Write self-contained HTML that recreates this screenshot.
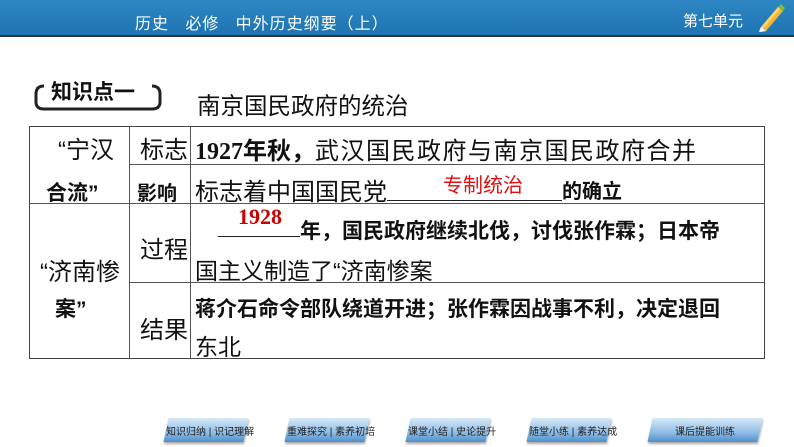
<!DOCTYPE html>
<html><head><meta charset="utf-8"><style>
*{margin:0;padding:0;box-sizing:border-box}
body{width:794px;height:447px;background:#fff;position:relative;overflow:hidden;font-family:"Liberation Sans","Noto Sans CJK SC",sans-serif}
.top{position:absolute;left:0;top:0;width:794px;height:35px;background:linear-gradient(180deg,#2d86c2,#1f74b2)}
.line{position:absolute;left:0;top:35px;width:794px;height:2px;background:#333}
.t{position:absolute;color:#fff;font-size:16px;top:10px;white-space:nowrap}
.a{position:absolute;white-space:nowrap;color:#111}
.s{font-family:"Liberation Serif","Noto Serif CJK SC",serif}
.h{position:absolute;background:#555}
.nav{position:absolute;top:418px;height:24px;width:80px;transform:skewX(-12deg);background:linear-gradient(#d8e9f7,#8fbde6 60%,#4f8fcb);box-shadow:1px 2px 2px #aaa}
.nt{position:absolute;top:423px;font-size:10px;color:#222;width:80px;text-align:center;white-space:nowrap}
</style></head><body>
<div class="top"></div><div class="line"></div>
<div class="t" style="left:135px;letter-spacing:1px">历史&nbsp;&nbsp;&nbsp;必修&nbsp;&nbsp;&nbsp;中外历史纲要（上）</div>
<div class="t" style="left:683px;font-size:15px">第七单元</div>
<svg style="position:absolute;left:758px;top:2px" width="28" height="30" viewBox="0 0 28 30"><path d="M3 25 L20 5 L25 9 L8 29 Z" fill="#f2b630"/><path d="M3 25 L20 5 L22 7 L5 27 Z" fill="#f7d56a"/><path d="M20 5 L25 9 L27 6 L23 2 Z" fill="#7cbc3a"/><path d="M3 25 L8 29 L1 30 Z" fill="#fff" stroke="#ccc" stroke-width=".5"/></svg>
<svg style="position:absolute;left:32px;top:78px" width="134" height="34"><path d="M4 16 Q4 8 12 8 M4 16 L4 24 Q4 31 12 31 L120 31 Q128 31 128 24 L128 16 Q128 8 120 8" fill="none" stroke="#222" stroke-width="3"/></svg>
<div class="a" style="left:51px;top:76px;font-size:21px;font-weight:bold">知识点一</div>
<div class="a" style="left:197px;top:87px;font-size:23.5px">南京国民政府的统治</div>
<!-- table -->
<div style="position:absolute;left:29px;top:126px;width:736px;height:233px;border:1.5px solid #444"></div>
<div class="h" style="left:129px;top:126px;width:1px;height:233px"></div>
<div class="h" style="left:190px;top:126px;width:1px;height:233px"></div>
<div class="h" style="left:129px;top:164px;width:636px;height:1px"></div>
<div class="h" style="left:29px;top:203px;width:736px;height:1px"></div>
<div class="h" style="left:129px;top:282px;width:636px;height:1px"></div>
<div class="a" style="left:58px;top:130px;font-size:24px">“宁汉</div>
<div class="a" style="left:46px;top:177px;font-size:21px;font-weight:bold">合流”</div>
<div class="a" style="left:140px;top:130px;font-size:24px">标志</div>
<div class="a" style="left:137px;top:177px;font-size:20px;font-weight:bold">影响</div>
<div class="a" style="left:195px;top:131px;font-size:24px"><b class="s">1927</b><b>年秋，</b><span style="letter-spacing:1.5px">武汉国民政府与南京国民政府合并</span></div>
<div class="a" style="left:195px;top:172px;font-size:24px">标志着中国国民党</div>
<div class="h" style="left:387px;top:200px;width:175px;height:1px;background:#222"></div>
<div class="a" style="left:443px;top:169px;font-size:20px;color:#d11">专制统治</div>
<div class="a" style="left:562px;top:175px;font-size:20px;font-weight:bold">的确立</div>
<div class="a" style="left:40px;top:252px;font-size:24px">“济南惨</div>
<div class="a" style="left:55px;top:293px;font-size:21px;font-weight:bold">案”</div>
<div class="a" style="left:140px;top:230px;font-size:24px">过程</div>
<div class="a" style="left:140px;top:310px;font-size:24px">结果</div>
<div class="a s" style="left:238px;top:204px;font-size:22px;color:#c00;font-weight:bold">1928</div>
<div class="h" style="left:218px;top:236px;width:82px;height:1px;background:#222"></div>
<div class="a" style="left:300px;top:215px;font-size:21px;font-weight:bold">年，国民政府继续北伐，讨伐张作霖；日本帝</div>
<div class="a" style="left:195px;top:252px;font-size:23px">国主义制造了“济南惨案</div>
<div class="a" style="left:195px;top:293px;font-size:21px;font-weight:bold">蒋介石命令部队绕道开进；张作霖因战事不利，决定退回</div>
<div class="a" style="left:195px;top:328px;font-size:23px">东北</div>
<!-- nav -->
<div class="nav" style="left:166px"></div><div class="nt" style="left:166px">知识归纳 | 识记理解</div>
<div class="nav" style="left:287px"></div><div class="nt" style="left:287px">重难探究 | 素养初培</div>
<div class="nav" style="left:408px"></div><div class="nt" style="left:408px">课堂小结 | 史论提升</div>
<div class="nav" style="left:529px"></div><div class="nt" style="left:529px">随堂小练 | 素养达成</div>
<div class="nav" style="left:650px;width:110px"></div><div class="nt" style="left:665px">课后提能训练</div>
</body></html>
